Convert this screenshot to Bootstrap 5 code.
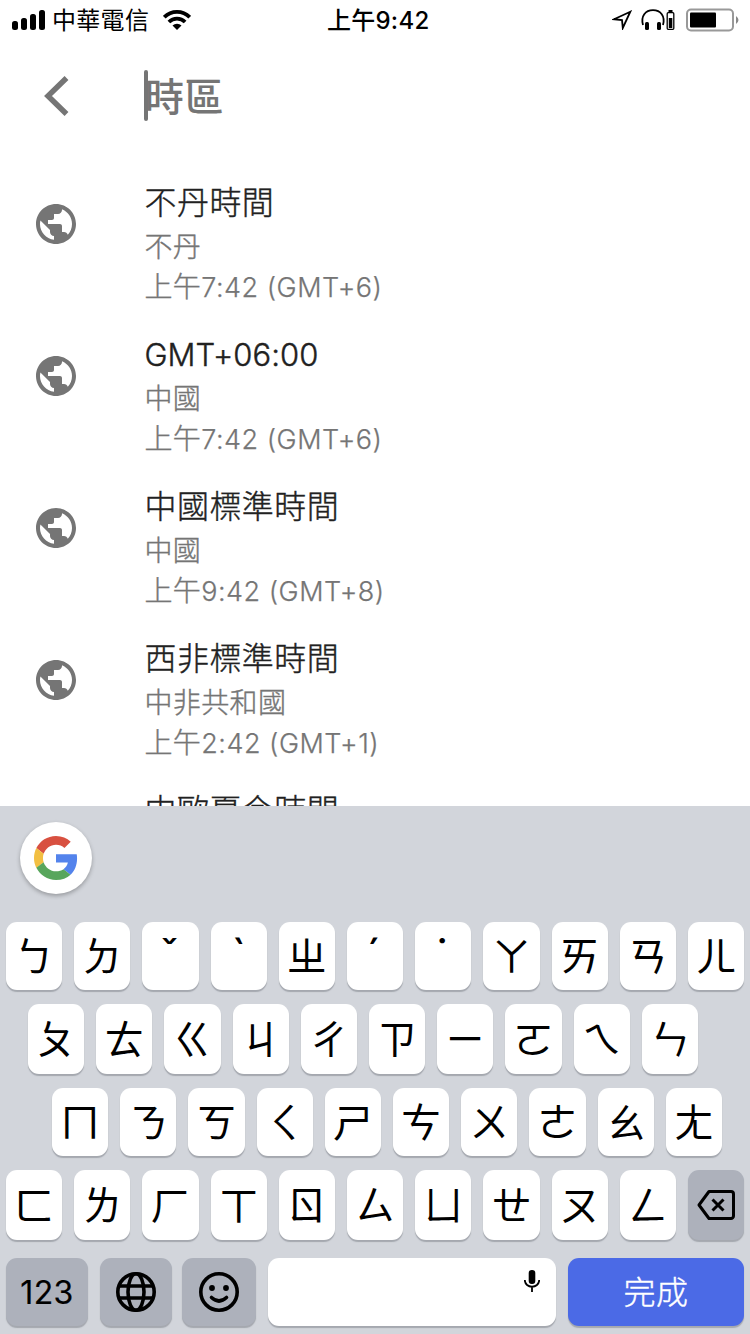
<!DOCTYPE html>
<html lang="zh-Hant">
<head>
<meta charset="utf-8">
<meta name="viewport" content="width=device-width, initial-scale=1">
<title>時區</title>
<link href="https://cdn.jsdelivr.net/npm/bootstrap@5.3.0/dist/css/bootstrap.min.css" rel="stylesheet">
<style>
body{font-family:Inter,"Noto Sans CJK TC",sans-serif;color:#212121;overflow:hidden}
.screen{width:750px;height:1334px}
svg{display:block;flex:none}
.status{height:40px;padding:0 10px 0 12px;color:#000;font-size:24px;line-height:40px}
.status .carrier{margin:2px 0 0 7px;letter-spacing:.3px}
.status .wifi{margin-left:14px}
.status .clock{left:327px;top:1px;letter-spacing:.25px}
.status .battery{margin-left:10px}
.search{height:118px}
.back{margin:36px 0 0 44px}
.caret{width:4px;height:51px;background:#757575;border-radius:2px;margin:30px 0 0 75px}
.hint{font-size:39px;line-height:56px;color:#757575;font-weight:500;margin:29px 0 0 -3px;letter-spacing:.4px}
.zones{height:648px}
.zone{height:152px;padding:22px 0 0 36px}
.zone svg{margin-top:24px}
.zone-text{margin-left:68.500px;font-weight:300;-webkit-text-stroke:.4px currentColor}
.zname{font-size:32px;line-height:46px;margin-bottom:1px;letter-spacing:.45px;color:#212121}
.zname .latin{font-size:31px;letter-spacing:.05px}
.zsub{font-size:28px;line-height:40px;letter-spacing:.35px;color:#757575}
.zsub .latin{font-size:27px;letter-spacing:.5px;-webkit-text-stroke-width:.25px}
.kbd-area{height:528px;background:#d2d5db;color:#000}
.gbtn{width:72px;height:72px;margin:16px 0 0 20px;box-shadow:0 2px 4px rgba(0,0,0,.28)}
.krow{display:flex;gap:12px;padding:0 6px}
.krow.r1{margin-top:28px;height:68px}
.krow.r2{margin-top:14px;height:70px;padding:0 52px 0 28px}
.krow.r3{margin-top:14px;height:68px;padding:0 28px 0 52px}
.krow.r4{margin-top:14px;height:70px}
.krow.r5{margin-top:18px;height:68px}
.key{flex:1 1 0;min-width:0;border:0;padding:0 0 4px;border-radius:11px;background:#fff;color:#000;box-shadow:0 2px 1px rgba(120,124,132,.5);font:400 40px/64px "Noto Sans CJK TC",sans-serif;display:flex;align-items:center;justify-content:center}
.key.tone{font-family:Inter,"Noto Sans CJK TC",sans-serif;font-size:45px;padding:0;text-indent:-2px}
.key.fn{background:#adb1bb;padding:0}
.key.num{flex:0 0 82px;font:400 32px Inter,sans-serif;letter-spacing:.4px;-webkit-text-stroke:.2px #000}
.key.lang{flex:0 0 72px}
.key.emoji{flex:0 0 74px;margin-left:-2px}
.key.space{flex:0 0 288px;padding:12px 16px 0 0;align-items:flex-start;justify-content:flex-end}
.key.done{background:#4b6ae6;color:#fff;font-size:32px;font-weight:300;letter-spacing:.5px;-webkit-text-stroke:.4px #fff;padding:0 0 4px}
</style>
</head>
<body>
<main class="screen d-flex flex-column bg-white overflow-hidden">
<header class="status d-flex align-items-center position-relative">
<svg width="33" height="22" viewBox="0 0 33 22"><rect y="12" width="6" height="9" rx="2.5"/><rect x="9" y="9" width="6" height="12" rx="2.5"/><rect x="18" y="5" width="6" height="16" rx="2.5"/><rect x="27" y="1" width="6" height="20" rx="2.5"/></svg>
<span class="carrier">中華電信</span>
<svg class="wifi" width="28" height="20" viewBox="0 0 28 20"><g fill="none" stroke="#000" stroke-width="3.8"><path d="M1.3 7.2a18 18 0 0 1 25.4 0M5.9 12a11.5 11.5 0 0 1 16.2 0"/></g><path d="M14 20l-4.5-4.4a6.3 6.3 0 0 1 9 0z"/></svg>
<span class="clock position-absolute fw-medium">上午9:42</span>
<div class="ms-auto d-flex align-items-center">
<svg width="20" height="20" viewBox="0 0 20 20"><path d="M18.300 1.700L2 9.200l8 .8.800 8z" fill="none" stroke="#000" stroke-width="1.800"/></svg>
<svg class="ms-2" width="36" height="22" viewBox="-1.500 0 36 22"><path d="M1.500 16C-1 7 4 1.200 11.500 1.200S24 7 21.500 16" fill="none" stroke="#000" stroke-width="1.800"/><rect x="3.500" y="13" width="4" height="8" rx="1.500"/><rect x="15.500" y="13" width="4" height="8" rx="1.500"/><rect x="25.700" y="3.700" width="6.600" height="16.600" rx="1" fill="none" stroke="#000" stroke-width="1.300"/><path d="M27 1h4v2h-4zM27.300 9h3.500v10h-3.500z"/></svg>
<svg class="battery" width="54" height="24" viewBox="0 0 54 24"><rect x="1" y="1.500" width="46" height="21" rx="4" fill="none" stroke="#999" stroke-width="2"/><rect x="4" y="4.500" width="26" height="15" rx="1"/><path d="M50 8q5 4 0 8z" fill="#888"/></svg>
</div>
</header>
<div class="search d-flex align-items-start">
<svg class="back" width="25" height="40" viewBox="0 0 25 40"><path d="M22.500 2L4 20l18.500 18" fill="none" stroke="#757575" stroke-width="5.500"/></svg>
<span class="caret"></span><span class="hint">時區</span>
</div>
<section class="zones overflow-hidden" id="zones"></section>
<section class="kbd-area flex-shrink-0">
<div class="gbtn rounded-circle bg-white d-flex align-items-center justify-content-center">
<svg width="44" height="44" viewBox="0 0 48 48"><path fill="#d85040" d="M24 9.500c3.540 0 6.710 1.220 9.210 3.600l6.850-6.850C35.900 2.380 30.470 0 24 0 14.620 0 6.510 5.380 2.560 13.220l7.980 6.190C12.430 13.720 17.740 9.500 24 9.500z"/><path fill="#5383ec" d="M46.980 24.550c0-1.570-.15-3.090-.38-4.550H24v9.020h12.940c-.58 2.960-2.260 5.480-4.780 7.180l7.730 6c4.510-4.180 7.090-10.360 7.090-17.650z"/><path fill="#f2bf42" d="M10.530 28.590c-.48-1.450-.76-2.990-.76-4.590s.27-3.140.76-4.590l-7.980-6.190C.92 16.460 0 20.120 0 24s.92 7.540 2.560 10.780z"/><path fill="#58a65c" d="M24 48c6.480 0 11.930-2.130 15.890-5.810l-7.730-6c-2.150 1.450-4.920 2.300-8.160 2.300-6.260 0-11.570-4.220-13.470-9.910l-7.980 6.190C6.510 42.620 14.620 48 24 48z"/></svg>
</div>
<div class="krow r1" data-keys="ㄅㄉˇˋㄓˊ˙ㄚㄞㄢㄦ"></div>
<div class="krow r2" data-keys="ㄆㄊㄍㄐㄔㄗㄧㄛㄟㄣ"></div>
<div class="krow r3" data-keys="ㄇㄋㄎㄑㄕㄘㄨㄜㄠㄤ"></div>
<div class="krow r4" data-keys="ㄈㄌㄏㄒㄖㄙㄩㄝㄡㄥ"></div>
<div class="krow r5">
<button class="key fn num">123</button>
<button class="key fn lang"><svg width="40" height="40" viewBox="0 0 40 40" fill="none" stroke="#000" stroke-width="3.600"><circle cx="20" cy="20" r="18.200"/><ellipse cx="20" cy="20" rx="8" ry="18.200"/><path d="M3 14h34M3 26h34"/></svg></button>
<button class="key fn emoji"><svg width="40" height="40" viewBox="0 0 40 40"><g fill="none" stroke="#000" stroke-width="3.600"><circle cx="20" cy="20" r="18.200"/><path d="M12.500 25.500q7.500 7 15 0" stroke-linecap="round"/></g><circle cx="13" cy="16" r="2.900"/><circle cx="27" cy="16" r="2.900"/></svg></button>
<button class="key space"><svg width="16" height="22" viewBox="0 0 16 22"><rect x="4.700" width="6.600" height="14" rx="3"/><path d="M.8 10c0 9 14.400 9 14.400 0M8 16.500V22" fill="none" stroke="#000" stroke-width="1.800"/></svg></button>
<button class="key done">完成</button>
</div>
</section>
</main>
<script src="https://cdn.jsdelivr.net/npm/bootstrap@5.3.0/dist/js/bootstrap.bundle.min.js"></script>
<script>
const zones=[["不丹時間","不丹","上午7:42 (GMT+6)"],["GMT+06:00","中國","上午7:42 (GMT+6)"],["中國標準時間","中國","上午9:42 (GMT+8)"],["西非標準時間","中非共和國","上午2:42 (GMT+1)"],["中歐夏令時間","",""]];
const latin=s=>s.replace(/[\x20-\x7e]+/g,'<span class="latin">$&</span>');
const globe='<svg width="40" height="40" viewBox="2 2 20 20"><path fill="#757575" d="M12 2C6.480 2 2 6.480 2 12s4.480 10 10 10 10-4.480 10-10S17.520 2 12 2zm-1 17.930c-3.950-.49-7-3.850-7-7.930 0-.62.080-1.210.21-1.790L9 15v1c0 1.100.9 2 2 2v1.930zm6.900-2.540c-.26-.81-1-1.390-1.900-1.390h-1v-3c0-.55-.45-1-1-1H8v-2h2c.55 0 1-.45 1-1V7h2c1.100 0 2-.9 2-2v-.41c2.930 1.190 5 4.060 5 7.410 0 2.080-.8 3.970-2.100 5.390z"/></svg>';
document.getElementById('zones').innerHTML=zones.map(z=>`<div class="zone d-flex align-items-start">${globe}<div class="zone-text"><div class="zname">${latin(z[0])}</div><div class="zsub">${latin(z[1])}</div><div class="zsub">${latin(z[2])}</div></div></div>`).join('');
document.querySelectorAll('[data-keys]').forEach(r=>{r.innerHTML=[...r.dataset.keys].map(k=>`<button class="key${'ˇˋˊ˙'.includes(k)?' tone':''}">${k}</button>`).join('')});
document.querySelector('.r4').insertAdjacentHTML('beforeend','<button class="key fn"><svg width="38" height="30" viewBox="0 0 38 30" fill="none" stroke="#000" stroke-width="3"><path d="M12 1.500h22a2.500 2.500 0 0 1 2.500 2.500v22a2.500 2.500 0 0 1-2.500 2.500H12L2 15z" stroke-linejoin="round"/><path d="M15.500 9.500l11 11M26.500 9.500l-11 11"/></svg></button>');
</script>
</body>
</html>
